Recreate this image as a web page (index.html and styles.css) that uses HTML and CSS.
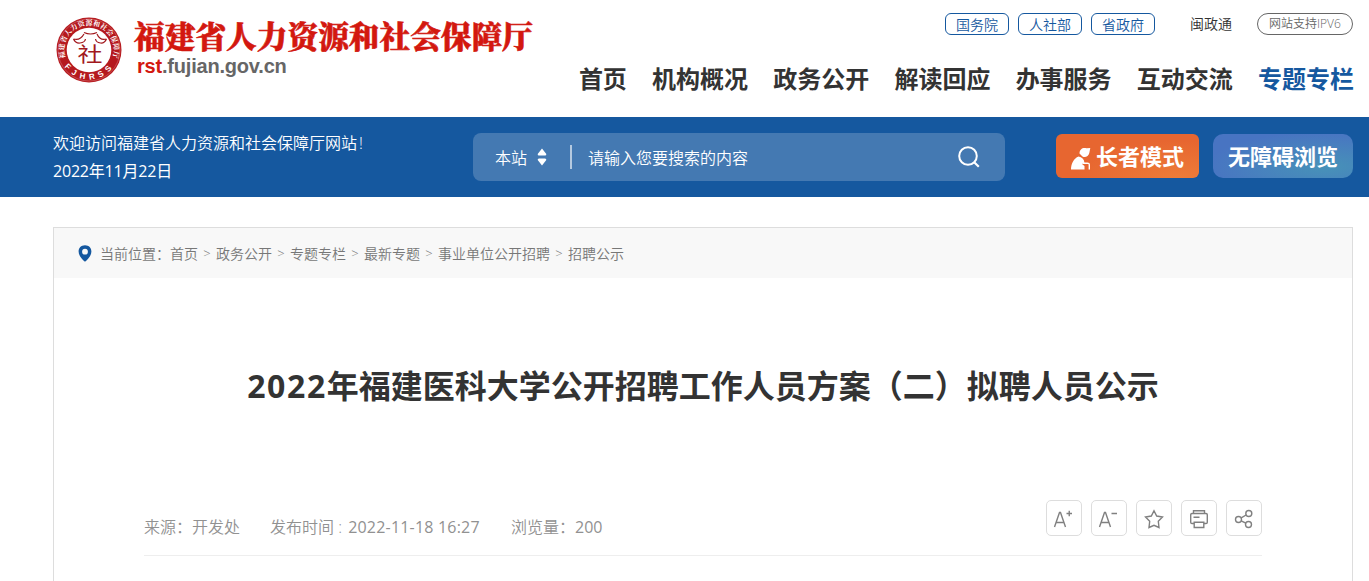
FILE: index.html
```html
<!DOCTYPE html>
<html lang="zh-CN">
<head>
  <meta charset="UTF-8">
  <title>2022年福建医科大学公开招聘工作人员方案（二）拟聘人员公示</title>
  <link rel="stylesheet" href="styles.css">
</head>
<body>

  <header class="header wrap">
    <a class="logo" href="#">
      <svg class="emblem" width="66" height="66" viewBox="0 0 66 66">
        <defs>
          <path id="arcTop" d="M9.200 40 A24.800 24.800 0 1 1 56.800 40"/>
          <path id="arcBottom" d="M4.500 41 A29.700 29.700 0 0 0 61.500 41"/>
        </defs>
        <circle cx="33" cy="33" r="32.5" fill="#b5191e"/>
        <circle cx="33" cy="33" r="31" fill="none" stroke="#d9797a" stroke-width=".5"/>
        <circle cx="33" cy="33" r="22.3" fill="#fff"/>
        <text class="seal-cn"><textPath href="#arcTop" startOffset="50%" text-anchor="middle">福建省人力资源和社会保障厅</textPath></text>
        <text class="seal-en"><textPath href="#arcBottom" startOffset="51.5%" text-anchor="middle">FJHRSS</textPath></text>
        <path d="M17.500 22 Q24 24 28 17 M28 15.500 Q34.500 18.500 41 15.500 M41 17 Q44 24 50.500 22 M17.500 22 Q19.500 26.500 24 26 Q29 25.500 29.500 22 M50.500 22 Q48.500 26.500 44.500 26 Q40 25.500 39.500 22" fill="none" stroke="#a2191e" stroke-width="1.200"/>
        <text class="seal-char" transform="translate(34 45) scale(1 .82)" text-anchor="middle">社</text>
      </svg>
      <span class="logo-text">
        <span class="logo-name">福建省人力资源和社会保障厅</span>
        <span class="logo-url"><b>rst</b>.fujian.gov.cn</span>
      </span>
    </a>
    <div class="header-right">
      <div class="top-links">
        <a class="chip" href="#">国务院</a>
        <a class="chip" href="#">人社部</a>
        <a class="chip" href="#">省政府</a>
        <a class="mzt" href="#">闽政通</a>
        <span class="ipv6">网站支持IPV6</span>
      </div>
      <nav class="nav">
        <a href="#">首页</a>
        <a href="#">机构概况</a>
        <a href="#">政务公开</a>
        <a href="#">解读回应</a>
        <a href="#">办事服务</a>
        <a href="#">互动交流</a>
        <a class="active" href="#">专题专栏</a>
      </nav>
    </div>
  </header>

  <div class="banner">
    <div class="banner-in wrap">
      <div class="welcome">
        <p>欢迎访问福建省人力资源和社会保障厅网站<span class="mark">!</span></p>
        <p class="today">2022年11月22日</p>
      </div>
      <div class="search">
        <span class="scope">本站</span>
        <svg class="arrows" width="10" height="18" viewBox="0 0 10 18"><path d="M5 .5 L9.300 6 Q9.500 7.500 8 7.500 H2 Q.5 7.500 .7 6 Z M5 17.500 L9.300 12 Q9.500 10.500 8 10.500 H2 Q.5 10.500 .7 12 Z" fill="#fff"/></svg>
        <span class="split"></span>
        <span class="placeholder">请输入您要搜索的内容</span>
        <svg class="glass" width="22" height="22" viewBox="0 0 22 22"><circle cx="10" cy="10" r="8.800" fill="none" stroke="#fff" stroke-width="2"/><path d="M16.200 16.200 L20.800 20.800" stroke="#fff" stroke-width="2.200"/></svg>
      </div>
      <a class="btn elder" href="#">
        <svg width="20" height="23" viewBox="0 0 20 23">
          <path d="M0 22.500 C0 17 3 11 7.500 9.500 C11 10 13 12 13.500 16 L11 17 L13.500 19 V22.500 Z" fill="#fff"/>
          <path d="M8.500 6.500 C8.500 2 12 .2 15.500 1.300 L19.300 1 L18.300 6 C17.500 9.500 14 11 11.500 9.500 Z" fill="#fff"/>
          <path d="M12 16.200 H16 Q18.300 16 18.300 18 V22.500" fill="none" stroke="#fff" stroke-width="1.400"/>
        </svg>
        <span>长者模式</span>
      </a>
      <a class="btn barrier" href="#">无障碍浏览</a>
    </div>
  </div>

  <main class="article wrap">
    <div class="crumbs">
      <svg class="pin" width="14" height="17" viewBox="0 0 14 17"><path d="M7 .3 C3 .3 .6 3.100 .6 6.600 C.6 10.500 4 14.500 7 16.800 C10 14.500 13.400 10.500 13.400 6.600 C13.400 3.100 11 .3 7 .3 Z M7 3.800 A2.900 2.900 0 1 1 7 9.600 A2.900 2.900 0 1 1 7 3.800 Z" fill="#15589f" fill-rule="evenodd"/></svg>
      <span>当前位置：</span>
      <a href="#">首页</a><i>&gt;</i>
      <a href="#">政务公开</a><i>&gt;</i>
      <a href="#">专题专栏</a><i>&gt;</i>
      <a href="#">最新专题</a><i>&gt;</i>
      <a href="#">事业单位公开招聘</a><i>&gt;</i>
      <a href="#">招聘公示</a>
    </div>

    <h1><span class="year">2022</span>年福建医科大学公开招聘工作人员方案（二）拟聘人员公示</h1>

    <div class="meta">
      <span class="source">来源：开发处</span>
      <span class="date">发布时间 : <span class="time">2022-11-18 16:27</span></span>
      <span class="views">浏览量：<span class="count">200</span></span>
      <div class="tools">
        <a href="#"><svg width="36" height="36" viewBox="0 0 36 36"><path d="M8.500 27 L13.500 12.500 H14.500 L19.500 27 M10.300 22.500 H17.700 M20.500 13.500 H26 M23.250 10.800 V16.200"/></svg></a>
        <a href="#"><svg width="36" height="36" viewBox="0 0 36 36"><path d="M8.500 27 L13.500 12.500 H14.500 L19.500 27 M10.300 22.500 H17.700 M20.500 13.500 H26"/></svg></a>
        <a href="#"><svg width="36" height="36" viewBox="0 0 36 36"><path d="M18 10.700 L20.700 16 L26.500 17 L22.300 21.300 L23 27.500 L18 25.300 L13 27.500 L13.700 21.300 L9.500 17 L15.300 16 Z"/></svg></a>
        <a href="#"><svg width="36" height="36" viewBox="0 0 36 36"><path d="M12.500 13.500 V10.700 H23.500 V13.500 M12.500 23.500 H11 Q9.700 23.500 9.700 22.300 V14.700 Q9.700 13.500 11 13.500 H25 Q26.300 13.500 26.300 14.700 V22.300 Q26.300 23.500 25 23.500 H23.500 M13.200 22.200 H22.800 V27.500 H13.200 Z M12.500 17.300 H18.500"/></svg></a>
        <a href="#"><svg width="36" height="36" viewBox="0 0 36 36"><circle cx="12.500" cy="19.500" r="3"/><circle cx="22.800" cy="13.500" r="3"/><circle cx="22.500" cy="24.500" r="3"/><path d="M15.200 17.900 L20.100 15 M15.200 20.900 L19.800 23.200"/></svg></a>
      </div>
    </div>
  </main>

</body>
</html>
```

FILE: styles.css
```css
* {
  box-sizing: border-box;
}

body {
  margin: 0;
  background: #fff;
  color: #333;
  font-family: "Open Sans", "Noto Sans CJK SC", sans-serif;
}

a {
  color: inherit;
  text-decoration: none;
}

.wrap {
  width: 1300px;
  margin-left: 53px;
}

.header {
  height: 117px;
  display: flex;
  justify-content: space-between;
}

.logo {
  display: flex;
  padding: 17px 0 0 3px;
}

.logo-text {
  margin-left: 12px;
  display: flex;
  flex-direction: column;
}

.logo-name {
  font: 900 30.7px/36px "Noto Serif CJK SC", "Noto Sans CJK SC", serif;
  color: #d3180f;
  white-space: nowrap;
  -webkit-text-stroke: .6px #d3180f;
}

.logo-url {
  margin: 1px 0 0 3px;
  font: bold 20px/24px "Liberation Sans", Arial, sans-serif;
  letter-spacing: -.2px;
  color: #666;
}

.logo-url b {
  color: #d3180f;
}

.seal-cn {
  font: bold 7px "Noto Serif CJK SC", "Noto Sans CJK SC", serif;
  letter-spacing: .2px;
  fill: #fff;
}

.seal-en {
  font: bold 8px "Liberation Sans", sans-serif;
  letter-spacing: 4.6px;
  fill: #fff;
}

.seal-char {
  font: 25px "Noto Sans CJK SC", sans-serif;
  fill: #a2191e;
}

.header-right {
  display: flex;
  flex-direction: column;
  align-items: flex-end;
}

.top-links {
  display: flex;
  align-items: center;
  height: 22px;
  margin-top: 13px;
  font-size: 14px;
  font-weight: 350;
}

.chip {
  width: 64px;
  height: 22px;
  margin-right: 9px;
  border: 1px solid #15589f;
  border-radius: 6px;
  line-height: 22px;
  text-align: center;
  color: #15589f;
}

.mzt {
  margin: -2px 25px 0 26px;
}

.ipv6 {
  width: 96px;
  height: 22px;
  border: 1px solid #666;
  border-radius: 11px;
  font-size: 12px;
  line-height: 20px;
  text-align: center;
  color: #666;
}

.nav {
  display: flex;
  gap: 25.2px;
  margin: 26px -1px 0 0;
  font-size: 24px;
  font-weight: bold;
  line-height: 36px;
}

.nav .active {
  color: #15589f;
}

.banner {
  height: 80px;
  background: #15589f;
  color: #fff;
}

.banner-in {
  display: flex;
  padding-top: 16px;
}

.welcome {
  width: 420px;
  margin-top: -4px;
  font-size: 16px;
  font-weight: 350;
  line-height: 28px;
}

.welcome p {
  margin: 0;
}

.welcome .today {
  font-weight: 400;
  letter-spacing: -.2px;
}

.mark {
  margin-left: 2px;
}

.search {
  display: flex;
  align-items: center;
  width: 532px;
  height: 48px;
  padding: 0 25px 0 22px;
  border-radius: 8px;
  background: #4479b2;
  font-size: 16px;
  font-weight: 350;
}

.arrows {
  margin-left: 10px;
}

.split {
  width: 2px;
  height: 24px;
  margin: 0 16px 0 23px;
  background: #b4c9e0;
}

.glass {
  margin-left: auto;
}

.btn {
  display: flex;
  align-items: center;
  justify-content: center;
  height: 44px;
  margin-top: 1px;
  padding-bottom: 2px;
  font-size: 22px;
  font-weight: bold;
}

.elder {
  width: 143px;
  margin-left: 51px;
  gap: 5px;
  border-radius: 6px;
  background: radial-gradient(ellipse at 85% 100%, #ed7c38, #e76630 60%);
}

.elder svg {
  margin-top: 7px;
}

.barrier {
  width: 140px;
  margin-left: 14px;
  border-radius: 10px;
  background: radial-gradient(ellipse at 80% 75%, #4792b8, #4874c2 75%);
}

.article {
  height: 354px;
  margin-top: 30px;
  border: 1px solid #ddd;
  border-bottom: 0;
}

.crumbs {
  display: flex;
  align-items: center;
  height: 50px;
  padding-left: 24px;
  background: #f8f8f8;
  font-size: 14px;
  font-weight: 350;
  color: #777;
}

.pin {
  margin-right: 8px;
}

.crumbs i {
  width: 18px;
  font-style: normal;
  font-size: 13px;
  text-align: center;
}

h1 {
  margin: 84px 0 0;
  font-size: 32px;
  line-height: 48px;
  text-align: center;
}

.year {
  letter-spacing: 1.6px;
}

.meta {
  display: flex;
  height: 56px;
  margin: 90px 90px 0;
  border-bottom: 1px solid #eee;
  font-size: 16px;
  font-weight: 350;
  line-height: 54px;
  color: #919191;
}

.source {
  width: 126px;
}

.date {
  width: 241px;
}

.time {
  margin-left: 2px;
  font-weight: 400;
  letter-spacing: .2px;
}

.count {
  font-weight: 400;
}

.tools {
  display: flex;
  gap: 9px;
  margin-left: auto;
}

.tools a {
  width: 36px;
  height: 36px;
  border: 1px solid #ddd;
  border-radius: 5px;
}

.tools svg {
  display: block;
  margin: -1px;
  fill: none;
  stroke: #808080;
  stroke-width: 1.4;
}
```
